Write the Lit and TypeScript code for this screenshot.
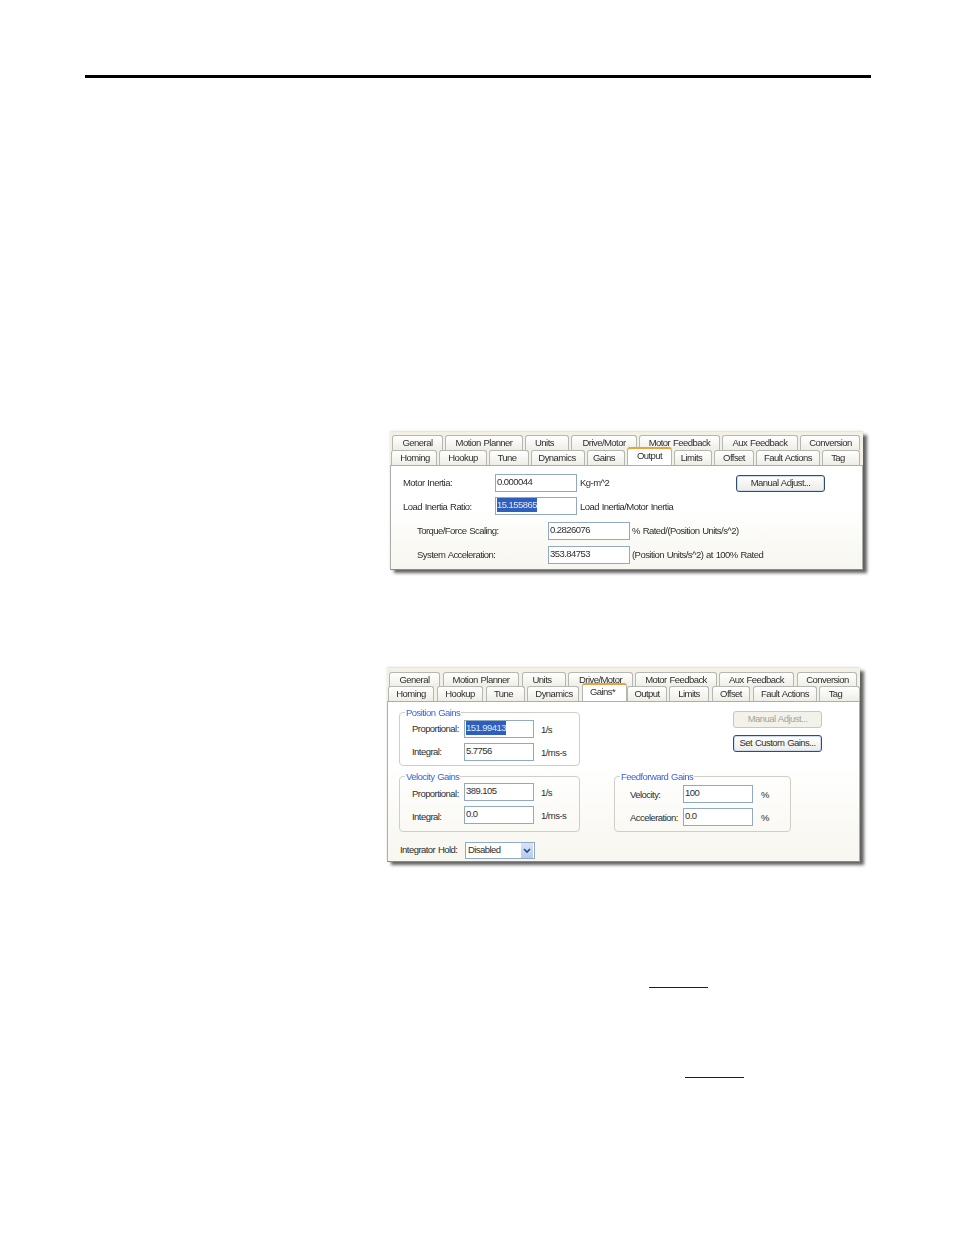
import { LitElement, html, css } from "lit";
import { customElement } from "lit/decorators.js";

type Tab = { label: string; x0: number; x1: number; on?: boolean; shift?: number };

const t = (label: string, x0: number, x1: number, shift = 0, on = false): Tab => ({ label, x0, x1, on, shift });

const output1 = [t("General", 392, 443), t("Motion Planner", 445, 523), t("Units", 525, 569, 5), t("Drive/Motor", 571, 637), t("Motor Feedback", 639, 720), t("Aux Feedback", 722, 798), t("Conversion", 800, 860, -1)];
const output2 = [t("Homing", 391, 437, -2), t("Hookup", 439, 487), t("Tune", 489, 529, 4), t("Dynamics", 531, 585, 2), t("Gains", 587, 625, 4), t("Output", 627, 672, 0, true), t("Limits", 674, 712, 3), t("Offset", 714, 754), t("Fault Actions", 756, 820), t("Tag", 822, 860, 6)];
const gains1 = [t("General", 389, 440), t("Motion Planner", 443, 519), t("Units", 522, 566, 4), t("Drive/Motor", 568, 633), t("Motor Feedback", 635, 717), t("Aux Feedback", 719, 794), t("Conversion", 797, 857, -1)];
const gains2 = [t("Homing", 388, 434), t("Hookup", 437, 483), t("Tune", 486, 525, 4), t("Dynamics", 527, 579, -2), t("Gains*", 582, 627, 4, true), t("Output", 627, 667), t("Limits", 669, 709), t("Offset", 712, 750), t("Fault Actions", 753, 817), t("Tag", 819, 860, 8)];

@customElement("app-root")
export class AppRoot extends LitElement {
  static styles = css`
    :host { display: block; width: 954px; height: 1235px; background: #fff; overflow: hidden; }
    .page { display: flex; flex-direction: column; padding: 75px 83px 0 85px; font-family: "Liberation Sans", Arial, sans-serif; }
    .rule { height: 3px; background: #000; flex: none; }
    .dialog { background: #f3f1e6; box-shadow: 4px 3px 3px rgba(60,60,60,.8), 0 -1px 2px rgba(190,190,170,.5); font-size: 9.5px; letter-spacing: -.55px; word-spacing: .7px; color: #2e2e2e; filter: blur(.4px); display: flex; flex-direction: column; }
    .d1 { width: 473px; height: 138px; margin: 354px 0 0 305px; padding-top: 3px; box-sizing: border-box; }
    .d2 { width: 473px; height: 194px; margin: 98px 0 0 302px; padding-top: 4px; box-sizing: border-box; }
    .tabs { display: flex; height: 15px; flex: none; position: relative; }
    .d2 .tabs:first-child { margin-bottom: -1px; }
    .tab { box-sizing: border-box; height: 15px; flex: none; border: 1px solid #b4b8b2; border-bottom: 0; border-radius: 3px 3px 0 0; background: linear-gradient(#fff, #eeede5); text-align: center; line-height: 14px; white-space: nowrap; }
    .tab.on { height: 18px; margin-top: -3px; background: #fff; border-top: 2px solid #e8a33a; line-height: 13px; position: relative; z-index: 1; }
    .panel { flex: 1; background: linear-gradient(#fff 40%, #f7f6ef); border: 1px solid #a8afac; border-bottom-color: #888; box-sizing: border-box; }
    .p1 { padding: 8px 0 0 12px; display: flex; flex-direction: column; }
    .row { display: flex; align-items: center; height: 18px; flex: none; }
    .up > span { padding-bottom: 2px; }
    .r2 { margin-top: 5px; }
    .r3 { margin-top: 7px; padding-left: 14px; }
    .r4 { margin-top: 6px; padding-left: 14px; }
    .l1 { width: 92px; flex: none; }
    .l2 { width: 131px; flex: none; }
    .input { box-sizing: border-box; height: 18px; width: 82px; flex: none; border: 1px solid #8faac2; background: #fff; padding: 1px 1px 0; line-height: 12px; }
    .input.s { width: 70px; }
    .sel { display: inline-block; background: #2f5fbd; color: #dfe8fa; padding: 1px 0; margin-top: -1px; }
    .u1 { margin-left: 3px; }
    .u2 { margin-left: 2px; }
    .btn { box-sizing: border-box; height: 17px; width: 89px; border: 1px solid #2f4d72; border-radius: 3px; background: linear-gradient(#fff, #ecebe4); box-shadow: inset 0 0 0 1px #cfdcf0; text-align: center; line-height: 14px; flex: none; }
    .btn.off { border-color: #c9c7ba; background: #f2f1ea; box-shadow: none; color: #a5a498; }
    .r1btn { margin-left: auto; margin-right: 37px; }
    .p2 { padding: 10px 0 0 11px; display: grid; grid-template-columns: 181px 1fr; row-gap: 10px; align-content: start; }
    .group { position: relative; box-sizing: border-box; border: 1px solid #cfcfc6; border-radius: 4px; display: flex; flex-direction: column; gap: 5px; }
    .legend { position: absolute; left: 5px; top: -6px; background: #fff; padding: 0 1px; line-height: 11px; color: #3b63d6; }
    .pos { height: 54px; padding: 7px 0 0 12px; }
    .pos span.gl { padding-bottom: 2px; }
    .vel { height: 56px; padding: 6px 0 0 12px; }
    .vel span.gl { padding-top: 2px; }
    .ff { height: 56px; width: 177px; margin-left: 34px; padding: 8px 0 0 15px; }
    .gl { width: 52px; flex: none; }
    .fl { width: 53px; flex: none; }
    .gu { margin-left: 7px; }
    .fu { margin-left: 8px; }
    .btns { display: flex; flex-direction: column; align-items: flex-end; gap: 7px; padding-right: 37px; margin-top: -1px; }
    .hold { grid-column: 1 / 3; display: flex; align-items: center; height: 17px; padding-left: 1px; }
    .hl { width: 65px; flex: none; padding-bottom: 3px; }
    .select { box-sizing: border-box; width: 70px; height: 17px; border: 1px solid #8faac2; background: #fff; display: flex; align-items: center; justify-content: space-between; padding-left: 2px; }
    .val { padding-bottom: 2px; }
    .arrow { width: 12px; height: 15px; background: linear-gradient(#d8e3f6, #b7caec); display: flex; align-items: center; justify-content: center; flex: none; margin-right: 1px; }
    .link { height: 1px; background: #00f; width: 59px; flex: none; }
    .k1 { margin: 125px 0 0 564px; }
    .k2 { margin: 89px 0 0 600px; }
  `;

  tabs(row: Tab[], start: number) {
    let prev = start;
    return html`<div class="tabs">${row.map((tab) => {
      const gap = tab.x0 - prev;
      prev = tab.x1;
      const shift = tab.shift ?? 0;
      const pad = shift > 0 ? `padding-right:${shift}px` : `padding-left:${-shift}px`;
      return html`<div class="tab ${tab.on ? "on" : ""}" style="width:${tab.x1 - tab.x0}px;margin-left:${gap}px;${pad}">${tab.label}</div>`;
    })}</div>`;
  }

  gainRow(label: string, value: unknown, unit: string) {
    return html`<div class="row"><span class="gl">${label}</span><div class="input s">${value}</div><span class="gu">${unit}</span></div>`;
  }

  ffRow(label: string, value: string) {
    return html`<div class="row"><span class="fl">${label}</span><div class="input s">${value}</div><span class="fu">%</span></div>`;
  }

  render() {
    return html`<div class="page">
      <div class="rule"></div>
      <div class="dialog d1">
        ${this.tabs(output1, 390)}
        ${this.tabs(output2, 390)}
        <div class="panel p1">
          <div class="row up"><span class="l1">Motor Inertia:</span><div class="input">0.000044</div><span class="u1">Kg-m^2</span><div class="btn r1btn">Manual Adjust...</div></div>
          <div class="row r2"><span class="l1">Load Inertia Ratio:</span><div class="input"><span class="sel">15.155865</span></div><span class="u1">Load Inertia/Motor Inertia</span></div>
          <div class="row r3 up"><span class="l2">Torque/Force Scaling:</span><div class="input">0.2826076</div><span class="u2">% Rated/(Position Units/s^2)</span></div>
          <div class="row r4 up"><span class="l2">System Acceleration:</span><div class="input">353.84753</div><span class="u2">(Position Units/s^2) at 100% Rated</span></div>
        </div>
      </div>
      <div class="dialog d2">
        ${this.tabs(gains1, 387)}
        ${this.tabs(gains2, 387)}
        <div class="panel p2">
          <div class="group pos"><span class="legend">Position Gains</span>
            ${this.gainRow("Proportional:", html`<span class="sel">151.99413</span>`, "1/s")}
            ${this.gainRow("Integral:", "5.7756", "1/ms-s")}
          </div>
          <div class="btns"><div class="btn off">Manual Adjust...</div><div class="btn">Set Custom Gains...</div></div>
          <div class="group vel"><span class="legend">Velocity Gains</span>
            ${this.gainRow("Proportional:", "389.105", "1/s")}
            ${this.gainRow("Integral:", "0.0", "1/ms-s")}
          </div>
          <div class="group ff"><span class="legend">Feedforward Gains</span>
            ${this.ffRow("Velocity:", "100")}
            ${this.ffRow("Acceleration:", "0.0")}
          </div>
          <div class="hold"><span class="hl">Integrator Hold:</span>
            <div class="select"><span class="val">Disabled</span><span class="arrow"><svg width="8" height="6" viewBox="0 0 8 6"><path d="M1 1l3 3 3-3" fill="none" stroke="#2c4a86" stroke-width="1.6"/></svg></span></div>
          </div>
        </div>
      </div>
      <div class="link k1"></div>
      <div class="link k2"></div>
    </div>`;
  }
}
